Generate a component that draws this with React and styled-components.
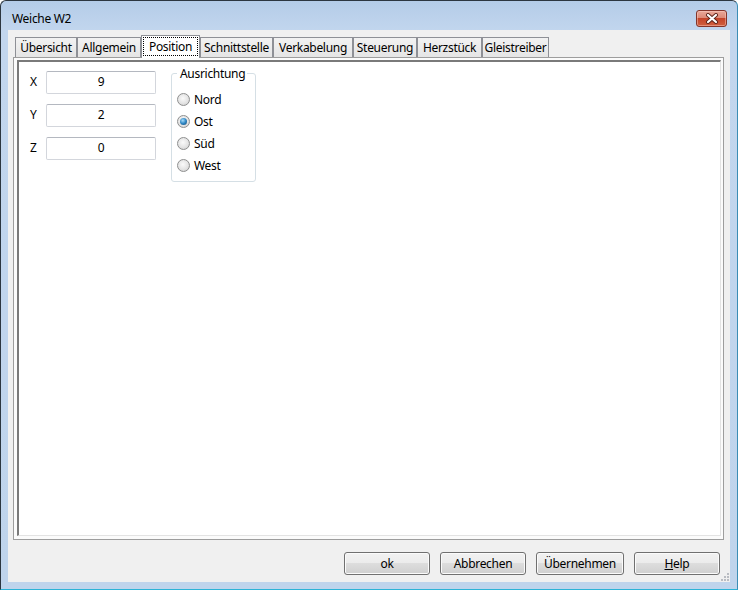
import React from "react";
import styled, { createGlobalStyle } from "styled-components";

const GlobalStyle = createGlobalStyle`
  html, body {
    margin: 0;
    padding: 0;
    background: #ffffff;
  }
  body {
    font-family: "Noto Sans", "Liberation Sans", sans-serif;
    font-size: 12px;
    letter-spacing: -0.3px;
    color: #000;
  }
  * {
    box-sizing: border-box;
  }
`;

const Window = styled.div`
  width: 738px;
  height: 590px;
  display: flex;
  flex-direction: column;
  padding: 0 7px 7px 7px;
  background: linear-gradient(to bottom, #b4cce8 0px, #c2d6ee 30px, #bfd4ec 100%);
  border: 1px solid #2c3640;
  border-right-color: #3b8db5;
  border-bottom-color: #2db3d6;
  border-radius: 6px 6px 0 0;
`;

const TitleBar = styled.div`
  height: 29px;
  flex: none;
  display: flex;
  align-items: flex-start;
  justify-content: space-between;
  padding: 9px 3px 0 4px;
`;

const Title = styled.span`
  line-height: 17px;
  color: #000;
`;

const CloseButton = styled.div`
  width: 31px;
  height: 17px;
  display: flex;
  align-items: center;
  justify-content: center;
  border: 1px solid #83352a;
  border-radius: 3px;
  background: linear-gradient(
    to bottom,
    #e9a899 0%,
    #dd8a77 45%,
    #c44429 50%,
    #d0603f 100%
  );
  box-shadow: inset 0 0 0 1px rgba(255, 210, 200, 0.45);
`;

const Client = styled.div`
  position: relative;
  flex: 1;
  display: flex;
  flex-direction: column;
  background: #f0f0f0;
  padding: 5px 6px 0 5px;
`;

const TabStrip = styled.div`
  height: 22px;
  display: flex;
  align-items: flex-end;
  padding-left: 2px;
`;

const Tab = styled.div`
  position: relative;
  z-index: ${(p) => (p.$active ? 2 : 1)};
  width: ${(p) => p.$width}px;
  height: ${(p) => (p.$active ? 23 : 20)}px;
  margin-bottom: ${(p) => (p.$active ? -1 : 0)}px;
  display: flex;
  align-items: center;
  justify-content: center;
  padding: ${(p) => (p.$active ? "1px 1px 2px" : "0")};
  border: 1px solid #8e9096;
  border-bottom: none;
  background: ${(p) =>
    p.$active ? "#ffffff" : "linear-gradient(to bottom, #f2f2f2, #e5e5e5)"};
  white-space: nowrap;
`;

const FocusRect = styled.span`
  flex: 1;
  align-self: stretch;
  display: flex;
  align-items: center;
  justify-content: center;
  border: 1px dotted #000;
  padding-bottom: 1px;
`;

const Panel = styled.div`
  height: 483px;
  display: flex;
  border: 1px solid #9d9d9d;
  background: #fbfbfb;
  padding: 2px 2px 3px 3px;
`;

const PanelInner = styled.div`
  flex: 1;
  display: flex;
  align-items: flex-start;
  gap: 15px;
  background: #ffffff;
  border-style: solid;
  border-width: 2px 1px 1px 2px;
  border-color: #7a7a7a #e3e3e3 #e3e3e3 #7a7a7a;
  padding: 9px 0 0 11px;
`;

const Fields = styled.div`
  display: grid;
  grid-template-columns: 16px 110px;
  grid-auto-rows: 22px;
  row-gap: 11px;
  align-items: center;
`;

const FieldLabel = styled.label`
  line-height: 16px;
`;

const TextBox = styled.input`
  width: 110px;
  height: 23px;
  margin: 0;
  padding: 0 4px 1px;
  border: 1px solid #d3d6dc;
  border-top-color: #b4b8c0;
  border-radius: 2px;
  background: #fff;
  font: inherit;
  letter-spacing: inherit;
  color: #000;
  text-align: center;
  outline: none;
`;

const GroupBox = styled.fieldset`
  width: 85px;
  height: 116px;
  margin: -5px 0 0 0;
  padding: 7px 5px 4px 5px;
  border: 1px solid #d5dfe5;
  border-radius: 3px;
`;

const Legend = styled.legend`
  padding: 0 2px 0 3px;
  line-height: 15px;
`;

const RadioRow = styled.div`
  height: 22px;
  display: flex;
  align-items: center;
  gap: 4px;
`;

const RadioDot = styled.span`
  position: relative;
  width: 13px;
  height: 13px;
  flex: none;
  border-radius: 50%;
  border: 1px solid #8e8f8f;
  background: radial-gradient(
    circle at 45% 40%,
    #fafafa 0%,
    #e4e4e4 55%,
    #c9c9c9 100%
  );

  &::after {
    content: "";
    display: ${(p) => (p.$checked ? "block" : "none")};
    position: absolute;
    left: 2px;
    top: 2px;
    width: 7px;
    height: 7px;
    border-radius: 50%;
    background: radial-gradient(
      circle at 40% 35%,
      #a6dcfa 0%,
      #2e86c4 50%,
      #17466e 100%
    );
  }
`;

const ButtonRow = styled.div`
  display: flex;
  justify-content: flex-end;
  gap: 10px;
  margin-top: 12px;
  padding-right: 4px;
`;

const Button = styled.div`
  width: ${(p) => p.$width || 86}px;
  height: 23px;
  display: flex;
  align-items: center;
  justify-content: center;
  padding-bottom: 1px;
  border: 1px solid #707070;
  border-radius: 3px;
  background: linear-gradient(
    to bottom,
    #f2f2f2 0%,
    #ebebeb 50%,
    #dddddd 50%,
    #cfcfcf 100%
  );
  box-shadow: inset 0 0 0 1px #fbfbfb;
`;

const Mnemonic = styled.span`
  text-decoration: underline;
`;

const SizeGrip = styled.svg`
  position: absolute;
  right: 1px;
  bottom: 1px;
`;

const tabs = [
  { label: "Übersicht", width: 62 },
  { label: "Allgemein", width: 64 },
  { label: "Position", width: 59, active: true },
  { label: "Schnittstelle", width: 73 },
  { label: "Verkabelung", width: 80 },
  { label: "Steuerung", width: 64 },
  { label: "Herzstück", width: 65 },
  { label: "Gleistreiber", width: 67 },
];

const coords = [
  { axis: "X", value: "9" },
  { axis: "Y", value: "2" },
  { axis: "Z", value: "0" },
];

const directions = [
  { label: "Nord" },
  { label: "Ost", checked: true },
  { label: "Süd" },
  { label: "West" },
];

const CloseGlyph = () => (
  <svg width="14" height="11" viewBox="0 0 14 11">
    <path
      d="M3 2 L11 9 M11 2 L3 9"
      stroke="#5b2318"
      strokeWidth="4"
      strokeLinecap="round"
      fill="none"
    />
    <path
      d="M3 2 L11 9 M11 2 L3 9"
      stroke="#ffffff"
      strokeWidth="2.2"
      strokeLinecap="round"
      fill="none"
    />
  </svg>
);

const App = () => {
  return (
    <>
      <GlobalStyle />
      <Window>
        <TitleBar>
          <Title>Weiche W2</Title>
          <CloseButton>
            <CloseGlyph />
          </CloseButton>
        </TitleBar>
        <Client>
          <TabStrip>
            {tabs.map((t) => (
              <Tab key={t.label} $width={t.width} $active={t.active}>
                {t.active ? <FocusRect>{t.label}</FocusRect> : t.label}
              </Tab>
            ))}
          </TabStrip>
          <Panel>
            <PanelInner>
              <Fields>
                {coords.map((c) => (
                  <React.Fragment key={c.axis}>
                    <FieldLabel>{c.axis}</FieldLabel>
                    <TextBox readOnly value={c.value} />
                  </React.Fragment>
                ))}
              </Fields>
              <GroupBox>
                <Legend>Ausrichtung</Legend>
                {directions.map((d) => (
                  <RadioRow key={d.label}>
                    <RadioDot $checked={d.checked} />
                    <span>{d.label}</span>
                  </RadioRow>
                ))}
              </GroupBox>
            </PanelInner>
          </Panel>
          <ButtonRow>
            <Button>ok</Button>
            <Button>Abbrechen</Button>
            <Button $width={88}>Übernehmen</Button>
            <Button>
              <Mnemonic>H</Mnemonic>elp
            </Button>
          </ButtonRow>
          <SizeGrip width="10" height="10" viewBox="0 0 10 10">
            {[
              [8, 2],
              [5, 5],
              [8, 5],
              [2, 8],
              [5, 8],
              [8, 8],
            ].map(([x, y]) => (
              <rect key={`${x}-${y}`} x={x} y={y} width="2" height="2" fill="#b9bcc2" />
            ))}
          </SizeGrip>
        </Client>
      </Window>
    </>
  );
};

export default App;
